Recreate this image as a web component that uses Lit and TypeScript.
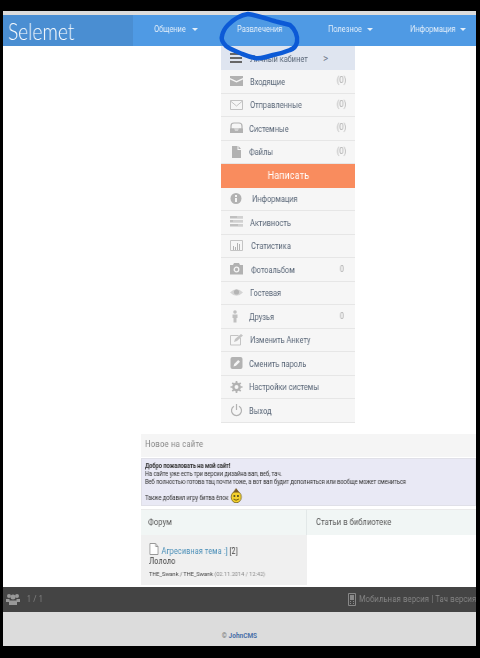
import { LitElement, html, css, svg } from "lit";
import { customElement } from "lit/decorators.js";

const G = "#b2b2b2";
const icons: Record<string, unknown> = {
  bars: svg`<path d="M0 2h12v2H0zM0 6h12v2H0zM0 10h12v2H0z" fill="#666"/>`,
  inbox: svg`<path d="M0 2h13v2L6.500 7 0 4zM0 5.500l6.500 3 6.500-3V12H0z" fill="${G}"/>`,
  sent: svg`<path d="M.5 2.500h12v9H.5zM.5 3l6 5 6-5" fill="none" stroke="#c2c2c2"/>`,
  sys: svg`<path d="M1 8V5q0-3 3-3h5q3 0 3 3v3z" fill="none" stroke="${G}" stroke-width="1.200"/><path d="M0 7.500h4l1 2h3l1-2h4V12H0z" fill="${G}"/>`,
  file: svg`<path d="M2 1h5.500v4H11v8H2zM8.500 1L11 4H8.500z" fill="${G}"/>`,
  info: svg`<circle cx="6" cy="6.500" r="5.500" fill="${G}"/><path d="M5 3h2v2H5zM5 6h2v4H5z" fill="#f5f5f5"/>`,
  act: svg`<path d="M0 1h13v2.500H0zM0 5h13v2.500H0zM0 9h13v2.500H0z" fill="#c0c0c0"/><path d="M7 2h6M3 6h10M8 10h5" stroke="#e2e2e2"/>`,
  stat: svg`<path d="M.5 1.500h12v10H.5z" fill="none" stroke="#c4c4c4"/><path d="M3 7h1v4H3zM5 8h1v3H5zM7 4h1v7H7zM9 5h1v6H9z" fill="${G}"/>`,
  cam: svg`<path d="M0 3h3l1-2h5l1 2h3v9.500H0z" fill="${G}"/><circle cx="6.500" cy="7.500" r="2.300" fill="none" stroke="#f5f5f5" stroke-width="1.300"/>`,
  eye: svg`<path d="M0 6.500Q6.500 0 13 6.500 6.500 13 0 6.500z" fill="#d4d4d4"/><circle cx="6.500" cy="6" r="2.600" fill="#b4b4b4"/>`,
  user: svg`<circle cx="5" cy="3" r="1.800" fill="#c0c0c0"/><path d="M2.500 5.500h5V9H6.500v4.500h-3V9h-1z" fill="#c0c0c0"/>`,
  edit: svg`<path d="M10.500 5v7h-10V2.500h8" fill="none" stroke="#c4c4c4"/><path d="M4 9l1-3 6-5 2 1.500-6 5.500z" fill="#c4c4c4"/>`,
  pen: svg`<rect x=".5" y="1" width="12" height="12" rx="2" fill="${G}"/><path d="M3.500 10.500l.7-2.500 4-4 1.800 1.800-4 4z" fill="#f5f5f5"/>`,
  gear: svg`<circle cx="6.500" cy="7" r="3.200" fill="none" stroke="${G}" stroke-width="2.400"/><path d="M6.500 1v12M.5 7h12M2.300 2.800l8.400 8.400M10.700 2.800l-8.400 8.400" stroke="${G}" stroke-width="1.700" stroke-dasharray="2.200 7.600"/>`,
  power: svg`<path d="M4 3.200a5 5 0 1 0 5 0" fill="none" stroke="${G}" stroke-width="1.200"/><path d="M6.500 1v6" stroke="${G}" stroke-width="1.200"/>`,
};

const topRows = [
  ["inbox", "Входящие", "(0)", 7],
  ["sent", "Отправленные", "(0)", 7],
  ["sys", "Системные", "(0)", 6],
  ["file", "Файлы", "(0)", 6],
] as const;
const lowRows = [
  ["info", "Информация", "", 9],
  ["act", "Активность", "", 7],
  ["stat", "Статистика", "", 8],
  ["cam", "Фотоальбом", "0", 8],
  ["eye", "Гостевая", "", 7],
  ["user", "Друзья", "0", 6],
  ["edit", "Изменить Анкету", "", 7],
  ["pen", "Сменить пароль", "", 6],
  ["gear", "Настройки системы", "", 6],
  ["power", "Выход", "", 6],
] as const;

@customElement("app-root")
export class AppRoot extends LitElement {
  static styles = css`
    :host { display: block; width: 480px; height: 658px; background: #000; overflow: hidden;
      font-family: Roboto, "Liberation Sans", sans-serif; }
    .page { position: relative; margin: 11px 4px 0 3px; width: 473px; height: 635px; background: #fff;
      display: flex; flex-direction: column; }
    .strip { height: 4px; background: #dcdcdc; flex: none; }
    .header { height: 31px; flex: none; display: flex; background: #4f9ae4; }
    .logo { width: 130px; background: #4a8ed2; color: #fff; font: 300 24px Lato, sans-serif;
      padding-left: 5px; box-sizing: border-box; line-height: 31px; }
    .logo span { display: inline-block; transform: scaleX(.8); transform-origin: left; will-change: transform; }
    .nav { flex: 1; display: flex; color: #e4effa; font-size: 9.500px; line-height: 28px; }
    .nav > span { display: flex; align-items: center; height: 28px; }
    .nav b { font-weight: 400; display: inline-block; white-space: nowrap; transform: scaleX(.78); transform-origin: left; will-change: transform; }
    .n1 { margin-left: 21px; width: 83px; }
    .n1 b { width: 38px; }
    .n2 { width: 91px; }
    .n3 { width: 82px; }
    .n3 b { width: 39px; }
    .n4 b { width: 50px; }
    .caret { width: 0; height: 0; border: 3px solid transparent; border-top: 3px solid #e4effa; border-bottom: 0; }
    .main { flex: 1; display: flex; flex-direction: column; min-height: 0; }
    .menu { width: 134px; margin-left: 218px; color: #5a6778; font-size: 9.500px; }
    .row { height: 23.5px; box-sizing: border-box; display: flex; align-items: center; background: #f6f6f6;
      border-bottom: 1px solid #e6e6e6; padding: 0 9px; }
    .row svg { width: 13px; height: 14px; flex: none; }
    .lab { display: inline-block; white-space: nowrap; transform: scaleX(.78); transform-origin: left; will-change: transform; }
    .row .v { margin-left: auto; color: #aaa; font-size: 9px; transform: scaleX(.85); transform-origin: right; padding-bottom: 2px; will-change: transform; }
    .row .v.zero { margin-right: 2px; padding-bottom: 0; }
    .cab { height: 24px; background: #dfe5f0; border: 0; }
    .cab .lab { width: 73px; }
    .cab .arrow { color: #6f7a8a; font-size: 10px; }
    .write { height: 23.5px; background: #f98c5e; color: #fff; font-size: 10.500px; letter-spacing: .2px;
      display: flex; align-items: center; justify-content: center; }
    .write span { transform: scaleX(.85); will-change: transform; }
    .section { width: 335px; margin-left: 138px; margin-top: 11.500px; }
    .title { height: 23px; background: #f5f5f5; color: #888; font-size: 9.500px; letter-spacing: .2px; line-height: 20px; padding-left: 4px; }
    .title span { display: inline-block; transform: scaleX(.82); transform-origin: left; will-change: transform; }
    .notice { height: 48px; margin-top: 1px; box-sizing: border-box; background: #e9e9f5; border: 1px solid #e0e0e8;
      color: #333; font-size: 6.500px; line-height: 8px; padding: 3px; white-space: nowrap; letter-spacing: -.08px; }
    .notice > div { transform: scaleX(.885); transform-origin: left; will-change: transform; }
    .notice svg { width: 16px; height: 15px; vertical-align: -3px; margin: -7px 0 0 1px; }
    .gap { height: 3px; }
    .cols { display: grid; grid-template-columns: 166px 169px; }
    .head { height: 26px; box-sizing: border-box; background: #f1f6f5; color: #555; font-size: 8.500px; line-height: 25px; padding-left: 7px;
      border-right: 1px solid #e2e8e8; border-top: 1px solid #eaeaea; letter-spacing: .15px; }
    .head + .head { border-right: 0; padding-left: 9px; }
    .head span { display: inline-block; transform: scaleX(.88); transform-origin: left; will-change: transform; }
    .body { height: 50px; background: #f0f0f0; padding: 8px 8px 0; box-sizing: border-box; grid-column: 1; width: 166px; color: #444; }
    .t1 { font-size: 9px; height: 12px; line-height: 12px; white-space: nowrap; transform: scaleX(.82); transform-origin: left; will-change: transform; }
    .t1 svg { width: 12px; height: 12px; vertical-align: -1px; }
    .t1 a { color: #4a8fb8; letter-spacing: .1px; margin-left: 1px; }
    .t2 { font-size: 9px; line-height: 12px; transform: scaleX(.82); transform-origin: left; will-change: transform; }
    .t3 { font-size: 6px; line-height: 9px; margin-top: 2px; white-space: nowrap; transform: scaleX(.93); transform-origin: left; will-change: transform; }
    .t3 i { font-style: normal; color: #888; }
    .dark { height: 25px; flex: none; background: #444; color: #888; display: flex; align-items: center; font-size: 9px; letter-spacing: .4px; padding-bottom: 1px; box-sizing: border-box; }
    .dark svg { width: 14px; height: 13px; flex: none; }
    .people { margin-left: 3px; margin-right: 7px; }
    .count { transform: scaleX(.8); transform-origin: left; will-change: transform; }
    .right { margin-left: auto; display: flex; align-items: center; white-space: nowrap; width: 128px; }
    .right span { transform: scaleX(.81); transform-origin: left; will-change: transform; }
    .phone { width: 8px !important; height: 13px !important; margin-right: 3px; }
    .foot { height: 34px; flex: none; background: #dcdcdc; color: #777; font-size: 6.500px; font-weight: 700; text-align: center;
      padding-top: 20px; box-sizing: border-box; }
    .foot a { color: #4a70a8; }
    .scribble { position: absolute; left: 212px; top: 0; width: 90px; height: 62px; pointer-events: none; overflow: visible; }
  `;

  private row(r: readonly [string, string, string, number]) {
    return html`<div class="row">
      <svg viewBox="0 0 13 14">${icons[r[0]]}</svg>
      <span class="lab" style="margin-left:${r[3]}px">${r[1]}</span>
      ${r[2] ? html`<span class="v ${r[2] === "0" ? "zero" : ""}">${r[2]}</span>` : ""}
    </div>`;
  }

  render() {
    return html`<div class="page">
      <div class="strip"></div>
      <div class="header">
        <div class="logo"><span>Selemet</span></div>
        <div class="nav">
          <span class="n1"><b>Общение</b><i class="caret"></i></span>
          <span class="n2"><b>Развлечения</b></span>
          <span class="n3"><b>Полезное</b><i class="caret"></i></span>
          <span class="n4"><b>Информация</b><i class="caret"></i></span>
        </div>
      </div>
      <div class="main">
        <div class="menu">
          <div class="row cab"><svg viewBox="0 0 13 14">${icons.bars}</svg><span class="lab" style="margin-left:7px">Личный кабинет</span><span class="arrow">&gt;</span></div>
          ${topRows.map((r) => this.row(r))}
          <div class="write"><span>Написать</span></div>
          ${lowRows.map((r) => this.row(r))}
        </div>
        <div class="section">
          <div class="title"><span>Новое на сайте</span></div>
          <div class="notice"><div>
            <b>Добро пожаловать на мой сайт!</b><br />
            На сайте уже есть три версии дизайна вап, веб, тач.<br />
            Веб полностью готова тац почти тоже, а вот вап будит дополняться или вообще может смениться<br /><br />
            Также добавил игру битва ёлок<svg viewBox="0 0 14 15">
              <circle cx="7" cy="9" r="5.800" fill="#f4d02c" stroke="#6b5a10" stroke-width=".8"/>
              <path d="M3.500 4.500L7 0l3.500 4.500z" fill="#7a5a20"/>
              <circle cx="5" cy="8" r="1" fill="#332"/><circle cx="9" cy="8" r="1" fill="#332"/>
              <path d="M4 11q3 2.500 6 0" fill="none" stroke="#6b5a10"/>
            </svg>
          </div></div>
          <div class="gap"></div>
          <div class="cols">
            <div class="head"><span>Форум</span></div>
            <div class="head"><span>Статьи в библиотеке</span></div>
            <div class="body">
              <div class="t1"><svg viewBox="0 0 11 12"><path d="M.5.500h7l3 3v8H.5zM7.500.500v3h3" fill="#fff" stroke="#999"/></svg> <a>Агресивная тема :]</a> [2]</div>
              <div class="t2">Лололо</div>
              <div class="t3">THE_Swank / THE_Swank <i>(02.11.2014 / 12:42)</i></div>
            </div>
          </div>
        </div>
      </div>
      <div class="dark">
        <svg class="people" viewBox="0 0 14 13"><circle cx="3" cy="3" r="2" fill="#999"/><circle cx="11" cy="3" r="2" fill="#999"/><circle cx="7" cy="4" r="2.500" fill="#999"/><path d="M0 6h3.500v3H0zM10.500 6H14v3h-3.500zM3 7.500h8V12H3z" fill="#999"/></svg>
        <span class="count">1 / 1</span>
        <div class="right">
          <svg class="phone" viewBox="0 0 8 13"><path d="M.5.500h7v12h-7z" fill="none" stroke="#888"/><path d="M2 2h4v5H2zM2 8h1v1H2zM5 8h1v1H5zM2 10h1v1H2zM5 10h1v1H5z" fill="#888"/></svg>
          <span>Мобильная версия | Тач версия</span>
        </div>
      </div>
      <div class="foot">© <a>JohnCMS</a></div>
      <svg class="scribble" viewBox="0 0 90 62"><path d="M33 3C45 5 55 9 63 11L75 14C80 18 83 25 82 31 81 36 78 38 75 39 68 42 63 43 58 44 52 46 46 48 40 47 34 46 30 44 25 42 20 40 15 38 11 35 8 32 6 28 7 25 8 20 10 17 13 14 19 8 26 4 33 3" fill="none" stroke="#0c5ad6" stroke-width="4.500" stroke-linecap="round" stroke-linejoin="round"/></svg>
    </div>`;
  }
}
